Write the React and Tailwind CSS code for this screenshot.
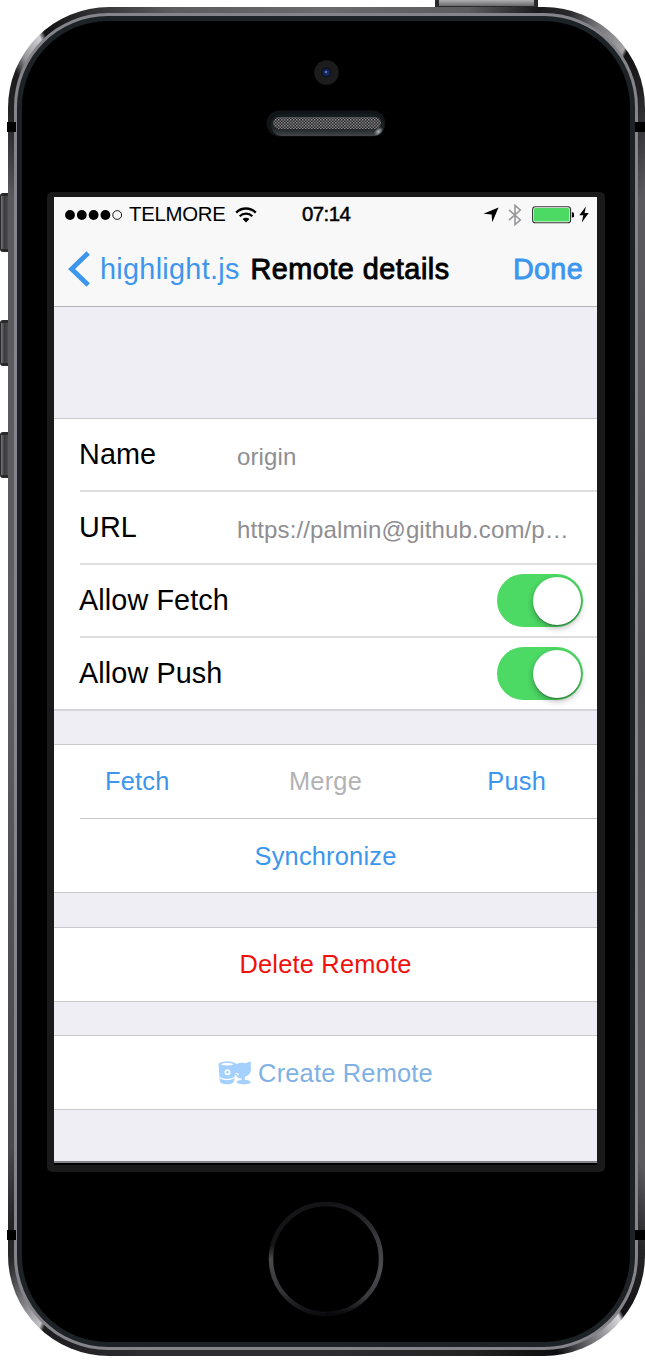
import React from "react";

const FRAME =
  "bg-[conic-gradient(#6a696e_0deg,#5c5b60_12deg,#1b1a1c_17.5deg,#29282b_20deg,#77777b_22.5deg,#a4a4a8_25.2deg,#111113_25.5deg,#222124_28deg,#5a595e_33deg,#4a494e_90deg,#5a595e_147deg,#242326_151deg,#111113_154.9deg,#d8d8dc_155.3deg,#77777b_158deg,#0d0d0f_161deg,#232324_168deg,#2e2e31_180deg,#2e2e31_195deg,#1c1b1e_203.6deg,#c4c4c8_204deg,#77777b_206.2deg,#2a292c_208.5deg,#232225_210deg,#4a494e_214deg,#5f5e63_270deg,#5a595e_327deg,#232225_331deg,#1c1b1e_333deg,#97979b_334.2deg,#d0d0d4_336deg,#111113_336.5deg,#2b2a2d_340deg,#5c5b60_347deg,#6a696e_360deg)]";

function SideButton({ className }) {
  return (
    <div
      className={`absolute left-0 w-[8px] rounded-l-[3px] border-y-[3px] border-l border-[#29282b] bg-linear-to-r from-[#77767a] via-[#3a393d] to-[#4d4c50] ${className}`}
    />
  );
}

function StatusBar() {
  return (
    <div className="flex h-[35px] items-center pl-[11px] pr-[8px] text-[20.4px] leading-none text-black">
      <svg width="58" height="12" viewBox="0 0 58 12" className="shrink-0">
        <circle cx="5" cy="6" r="4.9" />
        <circle cx="16.8" cy="6" r="4.9" />
        <circle cx="28.6" cy="6" r="4.9" />
        <circle cx="40.4" cy="6" r="4.9" />
        <circle cx="52.2" cy="6" r="4.4" fill="none" stroke="#000" strokeWidth="0.9" />
      </svg>
      <span className="ml-[6px] w-[98px] whitespace-nowrap tracking-[-0.3px]">TELMORE</span>
      <svg width="22" height="16" viewBox="0 0 22 16" className="ml-[8px] shrink-0" fill="none" stroke="#000" strokeWidth="2.3">
        <path d="M1.2 5.6a13.8 13.8 0 0 1 19.6 0" />
        <path d="M4.7 9.2a8.9 8.9 0 0 1 12.6 0" />
        <path d="M11 15.6 7.6 12.1a4.8 4.8 0 0 1 6.8 0z" fill="#000" stroke="none" />
      </svg>
      <span className="ml-[45px] whitespace-nowrap tracking-[-0.55px] [-webkit-text-stroke:0.5px_#000]">07:14</span>
      <div className="ml-auto flex items-center">
        <svg width="16" height="16" viewBox="0 0 16 16">
          <path d="M15.5.5 9.3 15.3 8.6 7.6.5 6.8z" />
        </svg>
        <svg width="14" height="22" viewBox="0 0 14 22" className="ml-[9px]" fill="none" stroke="#98989b" strokeWidth="1.6">
          <path d="M1 5.8 12.3 16 7 20.6V1.4L12.3 6 1 16.2" />
        </svg>
        <svg width="42" height="18" viewBox="0 0 42 18" className="ml-[10px]">
          <rect x=".6" y=".8" width="38" height="16" rx="2.8" fill="#fff" stroke="#333" strokeWidth="1.1" />
          <rect x="1.8" y="2" width="35.6" height="13.6" rx="1.6" fill="#4cd964" />
          <path d="M39.9 6.2h.4a1.9 2.7 0 0 1 0 5.4h-.4z" />
        </svg>
        <svg width="10" height="17" viewBox="0 0 10 17" className="ml-[5px]">
          <path d="M6.9.5.3 9.3h4L2.8 16.5 9.7 7H5.6z" />
        </svg>
      </div>
    </div>
  );
}

function NavBar() {
  return (
    <div className="flex h-[74px] items-center pl-[14px] pr-[14px] text-[28.8px] leading-none text-[#3c96ee]">
      <svg width="22" height="36" viewBox="0 0 22 36" className="shrink-0" fill="none" stroke="#3c96ee" strokeWidth="4.8">
        <path d="M20.2 2 3.6 18l16.6 16" />
      </svg>
      <span className="ml-[10px] w-[142px] tracking-[0.3px]">highlight.js</span>
      <span className="ml-[8.5px] whitespace-nowrap tracking-[0.5px] text-black [-webkit-text-stroke:0.9px_#000]">
        Remote details
      </span>
      <span className="ml-auto tracking-[0.3px] [-webkit-text-stroke:0.8px_#3c96ee]">Done</span>
    </div>
  );
}

function Group({ className = "", children }) {
  return <div className={`border-y border-[#c9c8cd] bg-white ${className}`}>{children}</div>;
}

function Row({ label, last = false, children }) {
  return (
    <div className={`ml-[26px] flex items-center pr-[14px] text-[28.8px] text-black ${last ? "h-[71px]" : "h-[73px] border-b-2 border-[#dedee1]"}`}>
      <span className="-ml-px w-[158px] whitespace-nowrap tracking-[0.1px]">{label}</span>
      {children}
    </div>
  );
}

function Value({ children }) {
  return <span className="whitespace-nowrap pt-[5px] text-[24px] tracking-[0.12px] text-[#8e8e93]">{children}</span>;
}

function Toggle() {
  return (
    <div className="ml-auto flex h-[53px] w-[86px] justify-end rounded-full bg-[#4cd964] p-[2.5px]">
      <div className="size-[48px] rounded-full bg-white shadow-[0_3px_6px_rgba(0,0,0,0.3),0_1px_1px_rgba(0,0,0,0.25)]" />
    </div>
  );
}

function Screen() {
  return (
    <div className="flex h-[968px] w-[543px] flex-col overflow-hidden border-b-2 border-black bg-[#efeef4]">
      <div className="border-b border-[#b5b5b9] bg-[#f8f8f8]">
        <StatusBar />
        <NavBar />
      </div>
      <Group className="mt-[111px] border-b-2 border-b-[#d5d5d9]">
        <Row label="Name">
          <Value>origin</Value>
        </Row>
        <Row label="URL">
          <Value>https://palmin@github.com/p…</Value>
        </Row>
        <Row label="Allow Fetch">
          <Toggle />
        </Row>
        <Row label="Allow Push" last>
          <Toggle />
        </Row>
      </Group>
      <Group className="mt-[33px] text-[25.4px] tracking-[0.2px] text-[#3c96ee]">
        <div className="ml-[26px] flex h-[74px] items-center border-b border-[#c9c8cd] pl-[25px] pr-[51px]">
          <span className="w-[184px]">Fetch</span>
          <span className="text-[#b2b2b5]">Merge</span>
          <span className="ml-auto">Push</span>
        </div>
        <div className="flex h-[73px] items-center justify-center pt-[2px]">Synchronize</div>
      </Group>
      <Group className="mt-[34px] text-[25.4px] tracking-[0.2px] text-[#f1100c]">
        <div className="flex h-[73px] items-center justify-center">Delete Remote</div>
      </Group>
      <Group className="mt-[33px] text-[25.4px] tracking-[0.2px] text-[#80b1e4]">
        <div className="flex h-[73px] items-center justify-center gap-[6px] pt-px">
          <svg width="34" height="24" viewBox="0 0 34 24" fill="#a4d0fd">
            <path d="M.5 3.3C.5 1.5 4.3.4 9 .4c3.300 0 6 .5 7.500 1.400l2.500 1.200c1-.8 3-1.300 5-1.300s3.200.2 4 .6L30.500 1l2.300-.6v6.200c.8 3.500-.8 7.200-4 8.400-1 .4-2 .6-2 1.700v2.100c3.500.3 6 1.200 6 2.500 0 1.300-3.200 2-7.200 2s-7-.8-7-2c0-1.300 2.200-2 4.900-2.300v-1.500c-3 0-4.400-1.300-5.300-3.100l-1.500-.7-.3 5C16.300 21.800 13 23.300 9 23.300S2.300 22 1.800 20.200z" />
            <path d="M2.600 3.200C4 2.300 6.200 2 9 2s5.500.4 6.600 1.200c-1.400.8-3.800 1.200-6.600 1.200s-5-.4-6.400-1.200z" fill="#fff" />
            <circle cx="9.500" cy="11.200" r="3" fill="#fff" />
            <circle cx="9.500" cy="11.200" r="1.300" />
            <path d="M1.800 16.800c4 2.200 10 2.200 14.600 0M17.800 12.300l3 1.300" fill="none" stroke="#fff" strokeWidth="1.200" />
          </svg>
          <span>Create Remote</span>
        </div>
      </Group>
      <div className="mt-auto h-[2px] bg-[#85858a]" />
    </div>
  );
}

function Speaker() {
  return (
    <svg width="120" height="27" viewBox="0 0 120 27" className="mt-[25px]">
      <defs>
        <pattern id="mesh" width="3" height="3" patternUnits="userSpaceOnUse">
          <rect width="3" height="3" fill="#29292b" />
          <rect width="1.500" height="1.500" fill="#89898b" />
          <rect x="1.500" y="1.500" width="1.500" height="1.500" fill="#77777a" />
        </pattern>
        <linearGradient id="lip" x2="0" y2="1">
          <stop offset="0" stopColor="#14191b" />
          <stop offset=".65" stopColor="#1e2325" />
          <stop offset="1" stopColor="#424648" />
        </linearGradient>
        <radialGradient id="glint">
          <stop offset="0" stopColor="#b4b6b8" />
          <stop offset="1" stopColor="#b4b6b8" stopOpacity="0" />
        </radialGradient>
      </defs>
      <rect x=".5" y=".5" width="119" height="26" rx="13" fill="#101416" />
      <rect x="5" y="4" width="113" height="22" rx="11" fill="url(#lip)" />
      <rect x="7" y="7" width="108" height="12" rx="6" fill="url(#mesh)" />
      <ellipse cx="112.500" cy="21.500" rx="5.500" ry="3.500" transform="rotate(-42 112.500 21.500)" fill="url(#glint)" />
    </svg>
  );
}

function HomeButton() {
  return (
    <svg width="116" height="116" viewBox="0 0 116 116" className="mt-[29px]">
      <defs>
        <linearGradient id="ring-left" x2="0" y2="1">
          <stop offset="0" stopColor="#141316" />
          <stop offset=".38" stopColor="#151417" />
          <stop offset=".5" stopColor="#4a494d" />
          <stop offset=".8" stopColor="#333236" />
          <stop offset="1" stopColor="#0c0b0e" />
        </linearGradient>
        <linearGradient id="ring-right" x2="0" y2="1">
          <stop offset="0" stopColor="#141316" />
          <stop offset=".3" stopColor="#3a393d" />
          <stop offset=".6" stopColor="#4d4c50" />
          <stop offset=".85" stopColor="#3a393d" />
          <stop offset="1" stopColor="#080709" />
        </linearGradient>
      </defs>
      <path d="M58 3a55 55 0 0 0 0 110" fill="none" stroke="url(#ring-left)" strokeWidth="4.500" />
      <path d="M58 3a55 55 0 0 1 0 110" fill="none" stroke="url(#ring-right)" strokeWidth="4.500" />
    </svg>
  );
}

function AntennaBand({ className }) {
  return <div className={`absolute h-[10px] bg-black ${className}`} />;
}

export default function App() {
  return (
    <div className="relative h-[1366px] w-[645px] overflow-hidden bg-white pl-[7.5px] pt-[6.5px] font-['Liberation_Sans',Arial,sans-serif]">
      <SideButton className="top-[193px] h-[59px]" />
      <SideButton className="top-[320px] h-[46px]" />
      <SideButton className="top-[432px] h-[46px]" />
      <div className="absolute left-[435px] top-0 h-[7px] w-[103px] border-x-4 border-b border-[#29282b] bg-linear-to-b from-[#b0b0b2] to-[#6a6a6e]" />
      <div className={`relative h-[1349.5px] w-[637px] rounded-[101px] p-[6.5px] ${FRAME}`}>
        <div className="h-full rounded-[94px] bg-[#85848a] p-[3px]">
          <div className="h-full rounded-[91px] bg-[#1c2226] p-[5px]">
            <div className="flex h-full flex-col items-center rounded-[86px] bg-black pt-[39px]">
              <svg width="25" height="25" viewBox="0 0 25 25">
                <circle cx="12.5" cy="12.5" r="12.3" fill="#1d1c1d" />
                <circle cx="12.5" cy="12.5" r="5" fill="#0c1022" />
                <circle cx="12.5" cy="12.5" r="3.6" fill="#16265c" />
                <circle cx="12" cy="12" r="1.3" fill="#4f72b8" />
              </svg>
              <Speaker />
              <div className="mt-[55px] h-[980px] w-[558px] rounded-[5px] bg-[#1a1a1a] pl-[7px] pt-[5px]">
                <Screen />
              </div>
              <HomeButton />
            </div>
          </div>
        </div>
      </div>
      <AntennaBand className="left-[7px] top-[122px] w-[9px]" />
      <AntennaBand className="left-[635px] top-[122px] w-[10px]" />
      <AntennaBand className="left-[7px] top-[1230px] w-[9px]" />
      <AntennaBand className="left-[635px] top-[1230px] w-[10px]" />
    </div>
  );
}
